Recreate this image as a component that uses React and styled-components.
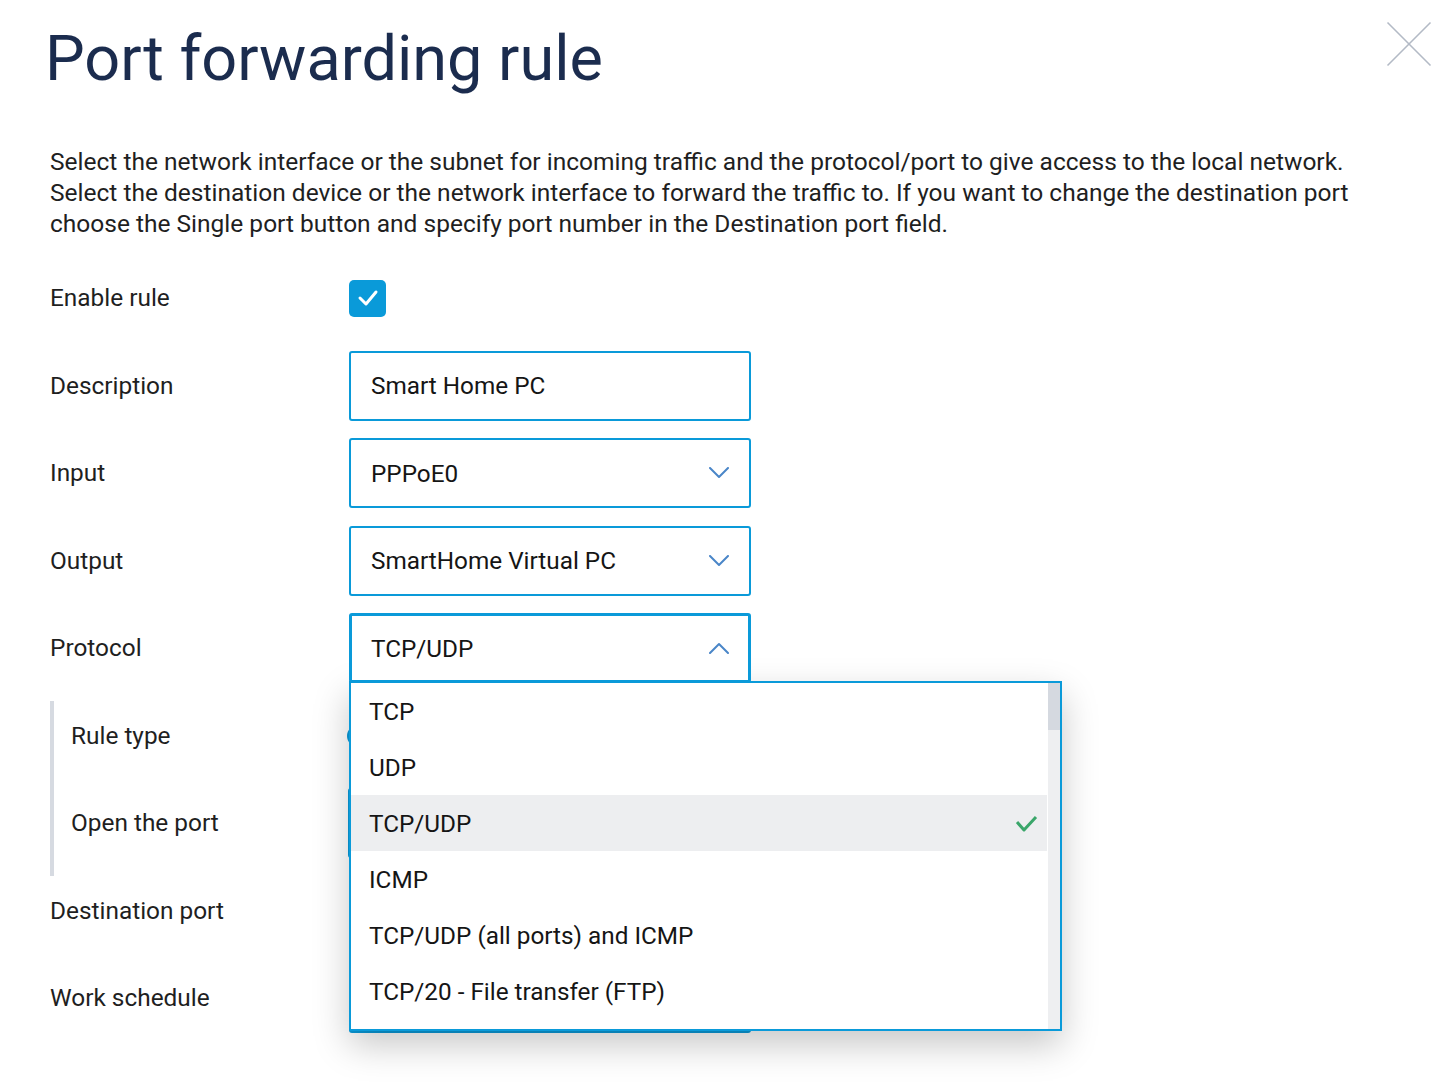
import React from "react"
import styled, { createGlobalStyle } from "styled-components"

const GlobalStyle = createGlobalStyle`
  html, body {
    margin: 0;
    padding: 0;
    background: #fff;
  }
  body {
    font-family: Roboto, "Noto Sans", "Liberation Sans", sans-serif;
    color: #1f1f1f;
  }
`

const protocols = [
  "TCP",
  "UDP",
  "TCP/UDP",
  "ICMP",
  "TCP/UDP (all ports) and ICMP",
  "TCP/20 - File transfer (FTP)",
  "TCP/21 - File transfer (FTP)",
  "TCP/22 - Remote access (SSH)",
]

const Chevron = ({ up }) => (
  <svg width="20" height="12" viewBox="0 0 20 12" fill="none">
    <polyline
      points={up ? "1,11 10,2 19,11" : "1,1 10,10 19,1"}
      stroke="#4a86c8"
      strokeWidth="2"
      strokeLinecap="round"
      strokeLinejoin="round"
    />
  </svg>
)

const App = () => {
  return (
    <Page>
      <GlobalStyle />
      <Header>
        <Title>Port forwarding rule</Title>
        <CloseButton aria-label="Close">
          <svg width="46" height="46" viewBox="0 0 46 46">
            <line x1="1.5" y1="1.5" x2="44.5" y2="44.5" stroke="#b3bac6" strokeWidth="1.6" />
            <line x1="44.5" y1="1.5" x2="1.5" y2="44.5" stroke="#b3bac6" strokeWidth="1.6" />
          </svg>
        </CloseButton>
      </Header>

      <Intro>
        Select the network interface or the subnet for incoming traffic and the protocol/port to give access to the local network.<br />
        Select the destination device or the network interface to forward the traffic to. If you want to change the destination port<br />
        choose the Single port button and specify port number in the Destination port field.
      </Intro>

      <Form>
        <Row>
          <Label>Enable rule</Label>
          <Checkbox>
            <svg width="22" height="18" viewBox="0 0 22 18" fill="none">
              <polyline points="3,9 9,15 19,3" stroke="#fff" strokeWidth="3" strokeLinecap="round" strokeLinejoin="round" />
            </svg>
          </Checkbox>
        </Row>

        <Row>
          <Label>Description</Label>
          <Field>Smart Home PC</Field>
        </Row>

        <Row>
          <Label>Input</Label>
          <Field>
            PPPoE0
            <Chevron />
          </Field>
        </Row>

        <Row>
          <Label>Output</Label>
          <Field>
            SmartHome Virtual PC
            <Chevron />
          </Field>
        </Row>

        <Row>
          <Label>Protocol</Label>
          <SelectWrap>
            <Field focused>
              TCP/UDP
              <Chevron up />
            </Field>
            <Dropdown>
              <Options>
                {protocols.map((p) => (
                  <Option key={p} selected={p === "TCP/UDP"}>
                    {p}
                    {p === "TCP/UDP" && (
                      <svg width="24" height="18" viewBox="0 0 24 18" fill="none">
                        <polyline points="3,8 10,16 22,3" stroke="#3aa66a" strokeWidth="3" strokeLinejoin="round" />
                      </svg>
                    )}
                  </Option>
                ))}
              </Options>
              <ScrollTrack>
                <ScrollThumb />
              </ScrollTrack>
            </Dropdown>
          </SelectWrap>
        </Row>

        <Group>
          <Row nested>
            <Label>Rule type</Label>
            <Radios>
              <Radio />
              <span>Forward</span>
            </Radios>
          </Row>
          <Row nested>
            <Label>Open the port</Label>
            <Field shift>
              Single port
              <Chevron />
            </Field>
          </Row>
        </Group>

        <Row>
          <Label>Destination port</Label>
          <Field>8080</Field>
        </Row>

        <Row>
          <Label>Work schedule</Label>
          <Field>
            Always on
            <Chevron />
          </Field>
        </Row>
      </Form>
    </Page>
  )
}

const Page = styled.div`
  width: 1443px;
  height: 1090px;
  box-sizing: border-box;
  padding: 0 11px 0 50px;
  overflow: hidden;
`

const Header = styled.div`
  display: flex;
  justify-content: space-between;
  align-items: flex-start;
`

const Title = styled.h1`
  margin: 22px 0 0 -5px;
  font-size: 63px;
  line-height: 74px;
  font-weight: 400;
  color: #1b2c4e;
`

const CloseButton = styled.button`
  margin-top: 21px;
  padding: 0;
  border: none;
  background: none;
  display: flex;
  cursor: pointer;
`

const Intro = styled.p`
  margin: 50px 0 0;
  font-size: 24.5px;
  line-height: 31px;
  color: #1f1f1f;
`

const Form = styled.div`
  margin-top: 24px;
  display: flex;
  flex-direction: column;
`

const Row = styled.div`
  display: grid;
  grid-template-columns: ${(p) => (p.nested ? "278px" : "299px")} 402px;
  align-items: center;
  height: 70px;
  padding-bottom: 17.5px;
`

const Label = styled.div`
  font-size: 24.4px;
  line-height: 70px;
  color: #1f1f1f;
`

const Checkbox = styled.div`
  width: 37px;
  height: 37px;
  border-radius: 5px;
  background: #0a9ad9;
  display: flex;
  align-items: center;
  justify-content: center;
`

const Field = styled.div`
  position: ${(p) => (p.focused ? "relative" : "static")};
  z-index: ${(p) => (p.focused ? 3 : "auto")};
  box-sizing: border-box;
  height: 70px;
  margin-left: ${(p) => (p.shift ? "-1px" : "0")};
  border: ${(p) => (p.focused ? "3px" : "2px")} solid #0a9ad9;
  border-radius: 3px;
  background: #fff;
  padding: 0 ${(p) => (p.focused ? "19px" : "20px")};
  display: flex;
  align-items: center;
  justify-content: space-between;
  font-size: 24.3px;
  color: #151515;
`

const SelectWrap = styled.div`
  position: relative;
`

const Dropdown = styled.div`
  position: absolute;
  z-index: 2;
  top: 68px;
  left: 0;
  width: 713px;
  height: 350px;
  box-sizing: border-box;
  border: 2px solid #0a9ad9;
  background: #fff;
  display: flex;
  box-shadow: 0 14px 34px rgba(0, 0, 0, 0.22);
`

const Options = styled.div`
  flex: 1;
  overflow: hidden;
`

const Option = styled.div`
  height: 56px;
  padding: 0 9px 0 18px;
  display: flex;
  align-items: center;
  justify-content: space-between;
  font-size: 24.3px;
  color: #151515;
  background: ${(p) => (p.selected ? "#edeef0" : "#fff")};
`

const ScrollTrack = styled.div`
  width: 12px;
  margin-left: 1px;
  background: #eeeff1;
`

const ScrollThumb = styled.div`
  height: 47px;
  background: #d5d9e0;
`

const Group = styled.div`
  border-left: 4px solid #d6dae1;
  padding-left: 17px;
`

const Radios = styled.div`
  display: flex;
  align-items: center;
  gap: 12px;
  margin-left: -2px;
  font-size: 24.3px;
  color: #151515;
`

const Radio = styled.span`
  width: 22px;
  height: 22px;
  border-radius: 50%;
  border: 2px solid #0a9ad9;
  box-sizing: border-box;
`

export default App
